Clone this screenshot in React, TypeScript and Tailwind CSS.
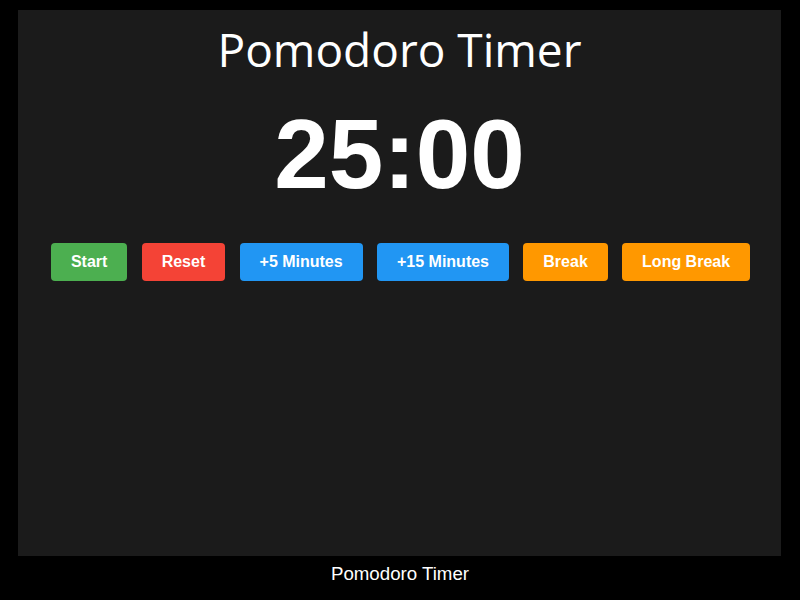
export default function App() {
  const buttons = [
    { label: "Start", cls: "bg-[#4caf50]" },
    { label: "Reset", cls: "bg-[#f44336]" },
    { label: "+5 Minutes", cls: "bg-[#2196f3]" },
    { label: "+15 Minutes", cls: "bg-[#2196f3]" },
    { label: "Break", cls: "bg-[#ff9800]" },
    { label: "Long Break", cls: "bg-[#ff9800]" },
  ];

  return (
    <div className="w-[800px] h-[600px] bg-black flex flex-col items-center pt-[10px] font-['Liberation_Sans',Arial,sans-serif]">
      <div className="w-[763px] h-[546px] ml-[-1px] bg-[#1b1b1b] flex flex-col items-center">
        <h1 className="mt-[11px] text-[46px] leading-[56px] text-white font-['Open_Sans',sans-serif]">
          Pomodoro Timer
        </h1>
        <div className="mt-[21px] text-[98px] leading-[112px] font-bold text-white">25:00</div>
        <div className="mt-[33px] ml-[2px] flex gap-[14.3px]">
          {buttons.map((b) => (
            <button
              key={b.label}
              className={`${b.cls} h-[38px] px-5 rounded-[4px] text-white font-bold text-[16px]`}
            >
              {b.label}
            </button>
          ))}
        </div>
      </div>
      <div className="mt-[8px] text-white text-[18.7px] leading-[20px]">Pomodoro Timer</div>
    </div>
  );
}
